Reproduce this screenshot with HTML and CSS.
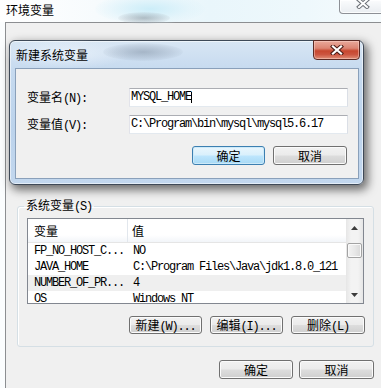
FILE: index.html
```html
<!DOCTYPE html>
<html lang="zh">
<head>
<meta charset="utf-8">
<title>环境变量</title>
<link rel="stylesheet" href="styles.css">
</head>
<body>
<div class="win">
  <div class="win-title">
    <div class="glass glass-1"></div>
    <div class="glass glass-2"></div>
    <span class="win-title-text">环境变量</span>
    <div class="win-close">
      <svg width="14" height="10" viewBox="0 0 14 10"><path d="M3 1 L11 8 M11 1 L3 8" stroke="#6d7177" stroke-width="4" stroke-linecap="square" fill="none"/><path d="M3 1 L11 8 M11 1 L3 8" stroke="#ffffff" stroke-width="2" stroke-linecap="square" fill="none"/></svg>
    </div>
  </div>
  <div class="win-client">
    <fieldset class="group">
      <legend>系统变量<span class="a">(S)</span></legend>
      <div class="list">
        <div class="list-main">
          <div class="lhead"><div class="c1">变量</div><div class="c2">值</div></div>
          <div class="row"><div class="c1 a">FP_NO_HOST_C...</div><div class="c2 a">NO</div></div>
          <div class="row"><div class="c1 a">JAVA_HOME</div><div class="c2 a">C:\Program Files\Java\jdk1.8.0_121</div></div>
          <div class="row row-sel"><div class="c1 a">NUMBER_OF_PR...</div><div class="c2 a">4</div></div>
          <div class="row"><div class="c1 a">OS</div><div class="c2 a">Windows_NT</div></div>
        </div>
        <div class="vscroll">
          <div class="sb-btn"><svg width="7" height="4" viewBox="0 0 7 4"><path d="M0 4 L3.5 0 L7 4 Z" fill="#3c3c3c"/></svg></div>
          <div class="sb-track"><div class="sb-thumb"></div></div>
          <div class="sb-btn"><svg width="7" height="4" viewBox="0 0 7 4"><path d="M0 0 L3.5 4 L7 0 Z" fill="#3c3c3c"/></svg></div>
        </div>
      </div>
      <div class="btnrow group-btns">
        <button class="btn w73">新建<span class="a">(W)...</span></button>
        <button class="btn w73">编辑<span class="a">(I)...</span></button>
        <button class="btn w74">删除<span class="a">(L)</span></button>
      </div>
    </fieldset>
    <div class="btnrow win-btns">
      <button class="btn w74 h19">确定</button>
      <button class="btn w75 h19">取消</button>
    </div>
  </div>
</div>

<div class="dlg">
  <div class="dlg-title">
    <div class="glass glass-3"></div>
    <div class="glass glass-4"></div>
    <span class="dlg-title-text">新建系统变量</span>
    <div class="dlg-close">
      <svg width="14" height="10" viewBox="0 0 14 10"><path d="M3 1.5 L11 8.5 M11 1.5 L3 8.5" stroke="#4a1c16" stroke-width="4.2" stroke-linecap="square" fill="none"/><path d="M3 1.5 L11 8.5 M11 1.5 L3 8.5" stroke="#ffffff" stroke-width="2.2" stroke-linecap="square" fill="none"/></svg>
    </div>
  </div>
  <div class="dlg-client">
    <div class="field">
      <label class="flabel">变量名<span class="a">(N):</span></label>
      <div class="input a">MYSQL_HOME<span class="caret"></span></div>
    </div>
    <div class="field">
      <label class="flabel">变量值<span class="a">(V):</span></label>
      <div class="input a">C:\Program\bin\mysql\mysql5.6.17</div>
    </div>
    <div class="btnrow dlg-btns">
      <button class="btn btn-default w73 h19">确定</button>
      <button class="btn w74 h19">取消</button>
    </div>
  </div>
</div>
</body>
</html>
```

FILE: styles.css
```css
* {
  box-sizing: border-box;
  margin: 0;
  padding: 0;
}

body {
  width: 381px;
  height: 388px;
  overflow: hidden;
  position: relative;
  background: #fbfdfe;
  font-family: "Noto Sans CJK SC", sans-serif;
  font-size: 12px;
  color: #000;
}

.a {
  font-family: "Liberation Mono", monospace;
  font-size: 12px;
  letter-spacing: -1.2px;
}

/* ---------- outer window ---------- */
.win-title {
  position: relative;
  height: 22px;
  display: flex;
  align-items: flex-start;
  background: linear-gradient(90deg, #ffffff 0%, #f7fbfd 25%, #e9f6fb 55%, #eef8fc 80%, #f6fbfd 100%);
}

.glass {
  position: absolute;
  pointer-events: none;
}

.glass-1 {
  left: 95px;
  top: -6px;
  width: 110px;
  height: 30px;
  border-radius: 50%;
  background: radial-gradient(ellipse at center, rgba(200, 236, 248, 0.9) 0%, rgba(220, 242, 250, 0.5) 50%, rgba(255, 255, 255, 0) 75%);
}

.glass-2 {
  left: 118px;
  top: 12px;
  width: 52px;
  height: 12px;
  border-radius: 50%;
  background: radial-gradient(ellipse at center, rgba(110, 120, 130, 0.45) 0%, rgba(140, 150, 160, 0.25) 50%, rgba(200, 210, 220, 0) 80%);
}

.win-title-text {
  position: relative;
  padding: 2px 0 0 6px;
  line-height: 15px;
  font-size: 12px;
}

.win-close {
  position: relative;
  margin-left: auto;
  margin-right: -6px;
  width: 48px;
  height: 14px;
  border: 1px solid #8d9096;
  border-top: none;
  border-radius: 0 0 4px 4px;
  background: linear-gradient(#fbfcfd, #e9edf1);
  box-shadow: inset 0 0 0 1px rgba(255, 255, 255, 0.8);
  display: flex;
  justify-content: center;
  align-items: flex-start;
}

.win-close svg {
  margin-top: -1px;
}

.win-client {
  margin-left: 5px;
  height: 366px;
  border-left: 1px solid #8c8e91;
  border-top: 1px solid #8c8e91;
  background: #f0f0f0;
  padding: 176px 7px 0 11px;
}

/* group box */
.group {
  width: 357px;
  border: 1px solid #d5dfe5;
  border-radius: 3px;
  padding: 0 9px 12px 9px;
  box-shadow: inset 1px 1px 0 #ffffff;
}

.group legend {
  margin-left: -3px;
  padding: 0 2px;
  line-height: 12px;
  font-size: 12px;
}

/* list view */
.list {
  margin-top: 5px;
  height: 86px;
  border: 1px solid #828790;
  background: #fff;
  display: flex;
  overflow: hidden;
}

.list-main {
  flex: 1;
  overflow: hidden;
}

.lhead {
  display: flex;
  height: 24px;
  border-bottom: 1px solid #e5e5e5;
  background: linear-gradient(#ffffff 0%, #ffffff 70%, #f2f5f9 100%);
  line-height: 23px;
}

.lhead .c1 {
  border-right: 1px solid #e2e7ed;
}

.lhead .c2 {
  padding-left: 4px;
}

.c1 {
  width: 100px;
  flex: none;
  padding-left: 6px;
  white-space: nowrap;
  overflow: hidden;
}

.c2 {
  flex: 1;
  padding-left: 5px;
  white-space: nowrap;
  overflow: hidden;
}

.row {
  display: flex;
  height: 16px;
  line-height: 16px;
}

.row-sel {
  background: #efefef;
}

.vscroll {
  width: 17px;
  flex: none;
  display: flex;
  flex-direction: column;
  background: linear-gradient(90deg, #e6e6e6 0%, #f3f3f3 30%, #f3f3f3 70%, #e6e6e6 100%);
}

.sb-btn {
  height: 17px;
  display: flex;
  justify-content: center;
  align-items: center;
}

.sb-track {
  flex: 1;
  padding-top: 7px;
}

.sb-thumb {
  margin: 0 1px;
  height: 15px;
  border: 1px solid #a3a3a3;
  border-radius: 2px;
  background: linear-gradient(90deg, #f3f3f3 0%, #e8e8e8 50%, #d9d9d9 100%);
  box-shadow: inset 0 0 0 1px #fafafa;
}

/* buttons */
.btnrow {
  display: flex;
  justify-content: flex-end;
}

.group-btns {
  margin-top: 12px;
  gap: 8px;
  padding-right: 0;
  margin-right: -1px;
}

.win-btns {
  margin-top: 13px;
  gap: 6px;
}

.btn {
  height: 18px;
  border: 1px solid #707070;
  border-radius: 3px;
  background: linear-gradient(#f2f2f2 0%, #ebebeb 48%, #dddddd 52%, #cfcfcf 100%);
  box-shadow: inset 0 0 0 1px #fbfbfb;
  font-family: "Noto Sans CJK SC", sans-serif;
  font-size: 12px;
  line-height: 16px;
  color: #000;
  text-align: center;
  white-space: nowrap;
}

.h19 { height: 19px; line-height: 17px; }
.w73 { width: 73px; }
.w74 { width: 74px; }
.w75 { width: 75px; }

.btn-default {
  border-color: #3c7fb1;
  background: linear-gradient(#eaf6fd 0%, #d9f0fc 48%, #bee6fd 52%, #a7d9f5 100%);
  box-shadow: inset 0 0 0 1px #cdeaf9;
}

/* ---------- dialog ---------- */
.dlg {
  position: absolute;
  left: 9px;
  top: 40px;
  width: 355px;
  height: 145px;
  border: 1px solid #3e4957;
  border-radius: 6px;
  padding: 0 4px 5px 5px;
  background: linear-gradient(180deg, #d8e6f4 0%, #c6daef 20%, #bcd3ec 60%, #c2d7ee 100%);
  box-shadow: inset 0 0 0 1px rgba(255, 255, 255, 0.55), 3px 4px 10px 1px rgba(0, 0, 0, 0.55);
}

.dlg-title {
  position: relative;
  height: 27px;
  display: flex;
  align-items: flex-start;
}

.glass-3 {
  left: -14px;
  top: -2px;
  width: 130px;
  height: 30px;
  border-radius: 50%;
  background: radial-gradient(ellipse at center, rgba(240, 246, 252, 0.7) 0%, rgba(240, 246, 252, 0) 70%);
}

.glass-4 {
  left: 88px;
  top: 2px;
  width: 80px;
  height: 18px;
  border-radius: 50%;
  background: radial-gradient(ellipse at center, rgba(95, 110, 130, 0.38) 0%, rgba(120, 135, 155, 0.2) 50%, rgba(180, 200, 220, 0) 78%);
}

.dlg-title-text {
  position: relative;
  padding: 7px 0 0 1px;
  line-height: 14px;
  font-size: 12px;
}

.dlg-close {
  position: relative;
  margin-left: auto;
  margin-right: -1px;
  margin-top: -1px;
  width: 47px;
  height: 20px;
  border: 1px solid #5b2a24;
  border-radius: 0 0 4px 4px;
  background: linear-gradient(#e9a99b 0%, #dc8573 40%, #c7472f 55%, #cc5540 75%, #e08f78 100%);
  box-shadow: inset 0 0 0 1px rgba(255, 220, 210, 0.45);
  display: flex;
  justify-content: center;
  align-items: center;
}

.dlg-client {
  height: 111px;
  border: 1px solid #8aa0ba;
  background: #f0f0f0;
  padding: 19px 9px 0 11px;
}

.field {
  display: flex;
  height: 19px;
  align-items: center;
}

.field + .field {
  margin-top: 8px;
}

.flabel {
  width: 102px;
  flex: none;
  line-height: 19px;
  white-space: nowrap;
}

.input {
  width: 219px;
  height: 19px;
  border: 1px solid;
  border-color: #abadb3 #dbdfe6 #e3e9ef #e2e3ea;
  background: #fff;
  padding-left: 1px;
  line-height: 17px;
  white-space: nowrap;
  display: flex;
  align-items: center;
}

.caret {
  display: inline-block;
  width: 1px;
  height: 11px;
  background: #000;
}

.dlg-btns {
  margin-top: 12px;
  gap: 8px;
  padding-right: 2px;
}
```
